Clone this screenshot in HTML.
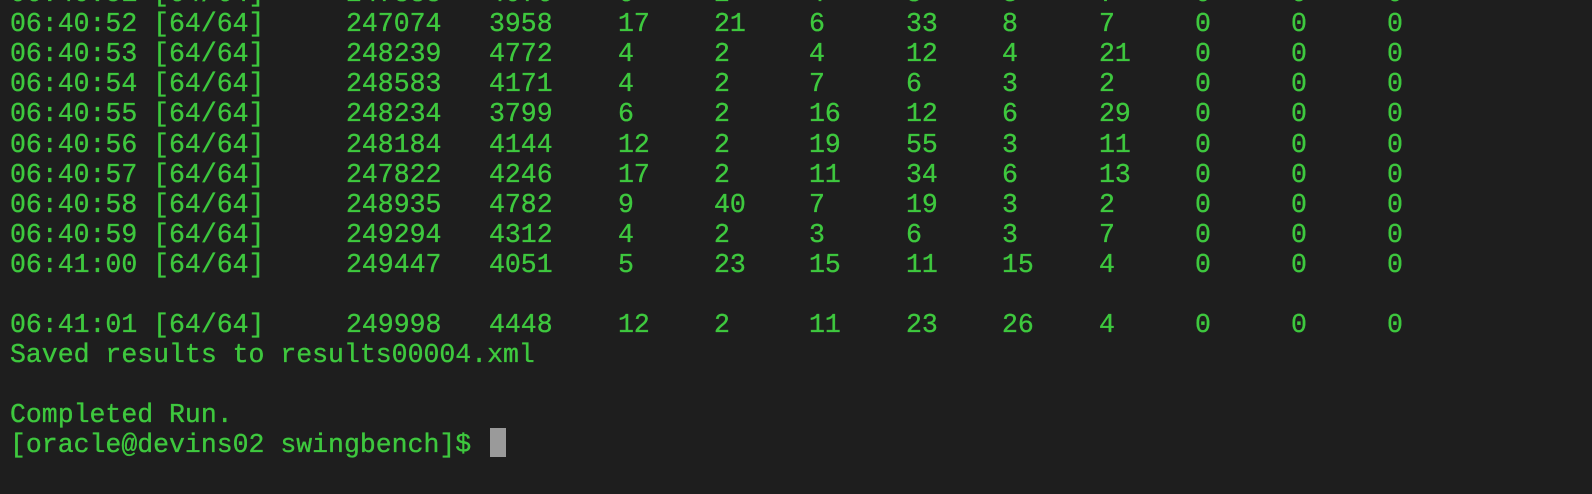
<!DOCTYPE html>
<html><head><meta charset="utf-8"><style>
html,body{margin:0;padding:0;background:#1e1e1e;width:1592px;height:494px;overflow:hidden}
.r{position:absolute;left:0;height:30px;line-height:30px;font-family:"Liberation Mono","DejaVu Sans Mono",monospace;font-size:26.5px;color:#3ec83e;-webkit-text-stroke:0.35px #3ec83e;white-space:pre;width:1592px}
.r span{position:absolute;top:0}
.cur{position:absolute;left:490px;top:428px;width:16px;height:29px;background:#9a9a9a}
</style></head><body>
<div id="t"></div>
<script>
var xs=[10,346,489,618,714,809,906,1002,1099,1195,1291,1387];
var rows=[
["06:40:51 [64/64]","247888","4076","6","2","4","8","3","7","0","0","0"],
["06:40:52 [64/64]","247074","3958","17","21","6","33","8","7","0","0","0"],
["06:40:53 [64/64]","248239","4772","4","2","4","12","4","21","0","0","0"],
["06:40:54 [64/64]","248583","4171","4","2","7","6","3","2","0","0","0"],
["06:40:55 [64/64]","248234","3799","6","2","16","12","6","29","0","0","0"],
["06:40:56 [64/64]","248184","4144","12","2","19","55","3","11","0","0","0"],
["06:40:57 [64/64]","247822","4246","17","2","11","34","6","13","0","0","0"],
["06:40:58 [64/64]","248935","4782","9","40","7","19","3","2","0","0","0"],
["06:40:59 [64/64]","249294","4312","4","2","3","6","3","7","0","0","0"],
["06:41:00 [64/64]","249447","4051","5","23","15","11","15","4","0","0","0"],
null,
["06:41:01 [64/64]","249998","4448","12","2","11","23","26","4","0","0","0"],
["Saved results to results00004.xml"],
null,
["Completed Run."],
["[oracle@devins02 swingbench]$ "]
];
var h="";
rows.forEach(function(r,i){
 var top=-20.75+i*30.05;
 if(!r)return;
 h+='<div class="r" style="top:'+top+'px">';
 r.forEach(function(c,j){h+='<span style="left:'+xs[j]+'px">'+c+'</span>';});
 h+='</div>';
});
document.getElementById('t').innerHTML=h;
</script>
<div class="cur"></div>
</body></html>
